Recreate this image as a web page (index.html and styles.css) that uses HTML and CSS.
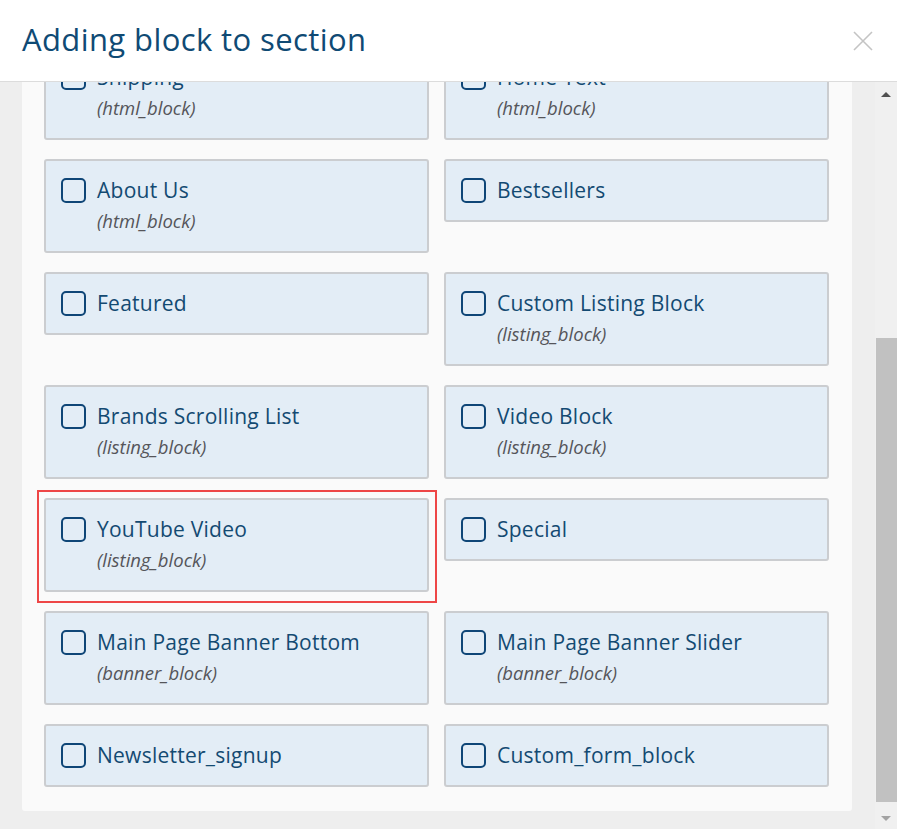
FILE: index.html
```html
<!DOCTYPE html>
<html lang="en">
<head>
<meta charset="utf-8">
<title>Adding block to section</title>
<link rel="stylesheet" href="styles.css">
</head>
<body>
<div class="modal">
  <header class="head">
    <h1 class="title">Adding block to section</h1>
    <button class="close" aria-label="Close">
      <svg width="22" height="22" viewBox="0 0 22 22"><path d="M2 2 L20 20 M20 2 L2 20" stroke="#c4c4c4" stroke-width="1.6" fill="none"/></svg>
    </button>
  </header>
  <div class="body">
    <div class="viewport">
      <div class="panel">
        <div class="grid">
          <label class="card"><span class="row"><span class="check"></span><span class="name">Shipping</span></span><span class="type">(html_block)</span></label>
          <label class="card"><span class="row"><span class="check"></span><span class="name">Home Text</span></span><span class="type">(html_block)</span></label>

          <label class="card"><span class="row"><span class="check"></span><span class="name">About Us</span></span><span class="type">(html_block)</span></label>
          <label class="card"><span class="row"><span class="check"></span><span class="name">Bestsellers</span></span></label>

          <label class="card"><span class="row"><span class="check"></span><span class="name">Featured</span></span></label>
          <label class="card"><span class="row"><span class="check"></span><span class="name">Custom Listing Block</span></span><span class="type">(listing_block)</span></label>

          <label class="card"><span class="row"><span class="check"></span><span class="name">Brands Scrolling List</span></span><span class="type">(listing_block)</span></label>
          <label class="card"><span class="row"><span class="check"></span><span class="name">Video Block</span></span><span class="type">(listing_block)</span></label>

          <label class="card card-marked"><span class="row"><span class="check"></span><span class="name">YouTube Video</span></span><span class="type">(listing_block)</span></label>
          <label class="card"><span class="row"><span class="check"></span><span class="name">Special</span></span></label>

          <label class="card"><span class="row"><span class="check"></span><span class="name">Main Page Banner Bottom</span></span><span class="type">(banner_block)</span></label>
          <label class="card"><span class="row"><span class="check"></span><span class="name">Main Page Banner Slider</span></span><span class="type">(banner_block)</span></label>

          <label class="card"><span class="row"><span class="check"></span><span class="name">Newsletter_signup</span></span></label>
          <label class="card"><span class="row"><span class="check"></span><span class="name">Custom_form_block</span></span></label>
        </div>
      </div>
    </div>
    <div class="scrollbar">
      <span class="arrow arrow-up"></span>
      <div class="track"><div class="thumb"></div></div>
      <span class="arrow arrow-down"></span>
    </div>
  </div>
</div>
</body>
</html>
```

FILE: styles.css
```css
* { box-sizing: border-box; }
html, body { margin: 0; padding: 0; }
body {
  width: 897px;
  height: 829px;
  overflow: hidden;
  font-family: "Open Sans", "Noto Sans", sans-serif;
  background: #eeeeee;
}
.modal {
  display: flex;
  flex-direction: column;
  height: 829px;
}
.head {
  height: 82px;
  flex: none;
  background: #ffffff;
  border-bottom: 1px solid #dcdcdc;
  display: flex;
  align-items: center;
  justify-content: space-between;
  padding: 0 22px 0 22px;
}
.title {
  margin: 0;
  font-weight: 400;
  font-size: 31px;
  line-height: 40px;
  color: #0f4a74;
  letter-spacing: 0.4px;
  position: relative;
  top: -2px;
}
.close {
  border: 0;
  background: none;
  padding: 0;
  width: 22px;
  height: 22px;
  margin-right: 1px;
  display: flex;
}
.body {
  flex: 1;
  display: flex;
  min-height: 0;
}
.viewport {
  flex: 1;
  overflow: hidden;
}
.panel {
  margin: -58px 23px 0 22px;
  background: #fafafa;
  border-radius: 0 0 3px 3px;
  padding: 22px 23px 24px 22px;
}
.grid {
  display: grid;
  grid-template-columns: 385px 385px;
  column-gap: 15px;
  row-gap: 19px;
  align-items: start;
}
.card {
  position: relative;
  display: flex;
  flex-direction: column;
  background: #e3edf6;
  border: 2px solid #cbcdd0;
  border-radius: 3px;
  padding: 14px 15px 15px 15px;
}
.card-marked::after {
  content: "";
  position: absolute;
  left: -9px;
  right: -10px;
  top: -10px;
  bottom: -13px;
  border: 2px solid #ee4646;
  pointer-events: none;
}
.row {
  display: flex;
  align-items: center;
  height: 30px;
}
.check {
  width: 25px;
  height: 25px;
  flex: none;
  border: 2px solid #0f4677;
  border-radius: 5px;
  margin-right: 11px;
}
.name {
  font-size: 21px;
  line-height: 30px;
  color: #134a72;
  letter-spacing: 0.25px;
}
.type {
  margin: 1px 0 0 36px;
  font-size: 18.5px;
  line-height: 30px;
  font-style: italic;
  color: #55555a;
}
.scrollbar {
  width: 22px;
  flex: none;
  background: #f0f0f0;
  display: flex;
  flex-direction: column;
  align-items: center;
}
.arrow {
  flex: none;
  height: 17px;
  width: 22px;
  position: relative;
}
.arrow::before {
  content: "";
  position: absolute;
  left: 6px;
  border-left: 5px solid transparent;
  border-right: 5px solid transparent;
}
.arrow-up::before {
  top: 10px;
  border-bottom: 5px solid #505050;
}
.arrow-down::before {
  top: 4px;
  border-top: 5px solid #a3a3a3;
}
.track {
  flex: 1;
  width: 22px;
  display: flex;
  flex-direction: column;
}
.thumb {
  margin-top: 239px;
  margin-left: 1px;
  height: 464px;
  background: #c1c1c1;
}
```
